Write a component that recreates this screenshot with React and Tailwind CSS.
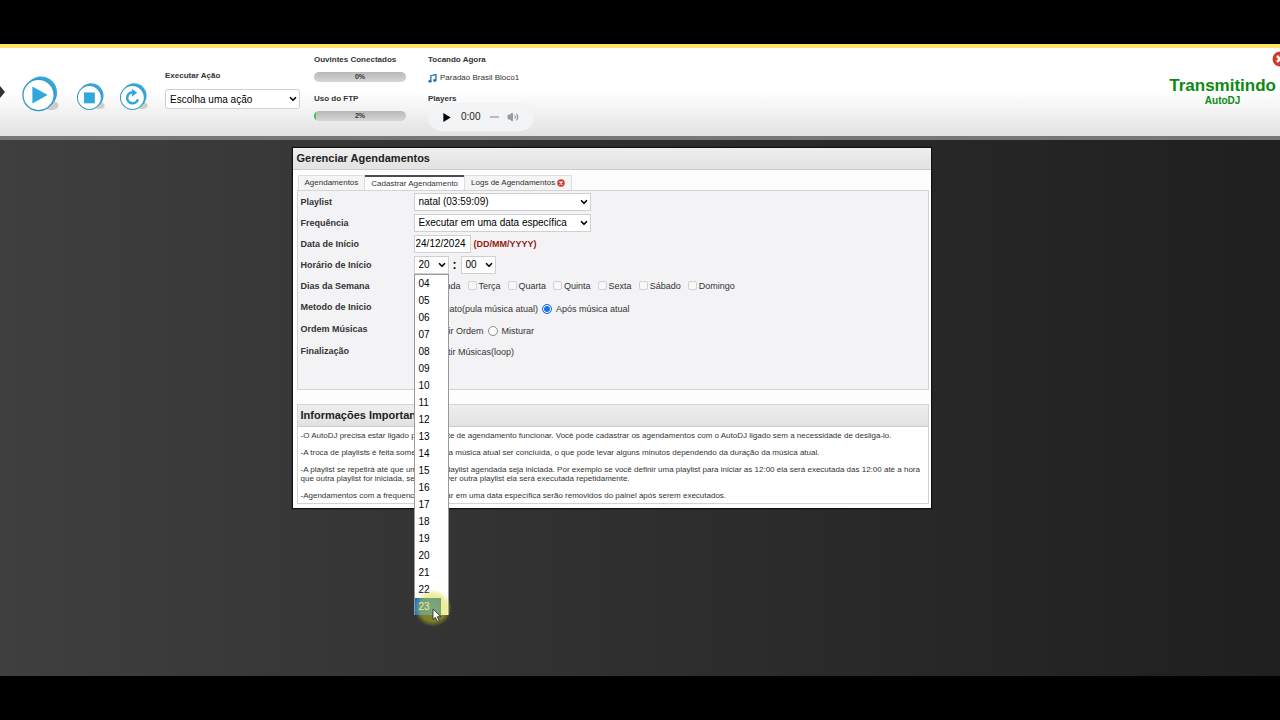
import React, { useState } from "react";
import { ChevronDown, Volume2 } from "lucide-react";

const HOURS = ["04", "05", "06", "07", "08", "09", "10", "11", "12", "13", "14", "15", "16", "17", "18", "19", "20", "21", "22", "23"];
const DAYS = ["Segunda", "Terça", "Quarta", "Quinta", "Sexta", "Sábado", "Domingo"];

const NOTES = [
  "-O AutoDJ precisa estar ligado para a parte de agendamento funcionar. Você pode cadastrar os agendamentos com o AutoDJ ligado sem a necessidade de desliga-lo.",
  "-A troca de playlists é feita somente após a música atual ser concluída, o que pode levar alguns minutos dependendo da duração da música atual.",
  "-A playlist se repetirá até que uma outra playlist agendada seja iniciada. Por exemplo se você definir uma playlist para iniciar as 12:00 ela será executada das 12:00 até a hora que outra playlist for iniciada, se não houver outra playlist ela será executada repetidamente.",
  "-Agendamentos com a frequencia executar em uma data específica serão removidos do painel após serem executados.",
];

function Select({ id, label, value, options = [value], className = "", onMouseDown }) {
  return (
    <div className={`relative ${className}`}>
      <select
        id={id}
        aria-label={label}
        defaultValue={value}
        onMouseDown={onMouseDown}
        className="block h-full w-full appearance-none border border-[#d0d0d0] bg-white pl-1 text-[10px] text-black rounded-[inherit] outline-none"
      >
        {options.map((o) => (
          <option key={o}>{o}</option>
        ))}
      </select>
      <ChevronDown className="pointer-events-none absolute right-[2px] top-1/2 size-[10px] -translate-y-1/2 text-black" strokeWidth={4} />
    </div>
  );
}

function RoundButton({ label, className, children }) {
  return (
    <button type="button" aria-label={label} className={`shrink-0 ${className}`}>
      <svg viewBox="0 0 40 38" className="block w-full">
        <ellipse cx="32" cy="31" rx="7.5" ry="5" fill="#bbb" opacity="0.7" />
        <circle cx="21" cy="17.5" r="17" fill="#30a8dc" />
        <circle cx="18.5" cy="20" r="16.5" fill="#fff" stroke="#3797c2" strokeWidth="1.4" />
        {children}
      </svg>
    </button>
  );
}

function CloseBadge({ className }) {
  return (
    <svg viewBox="0 0 16 16" className={className}>
      <circle cx="8" cy="8" r="7.5" fill="#cf3b2b" />
      <path d="M5 5l6 6M11 5l-6 6" stroke="#fff" strokeWidth="2.6" />
    </svg>
  );
}

function Meter({ title, value }) {
  return (
    <div>
      <div className="whitespace-nowrap text-[8px] font-bold leading-3">{title}</div>
      <div className="relative mt-[6px] h-[10px] overflow-hidden rounded-full bg-linear-to-b from-[#b8b8b8] to-[#d6d6d6] text-center text-[7px] font-bold leading-[10px]">
        <div className="absolute inset-y-0 left-0 bg-[#3fc44b]" style={{ width: `${value}%` }} />
        <span className="relative">{value}%</span>
      </div>
    </div>
  );
}

function Row({ label, htmlFor, className = "h-[21px]", children }) {
  return (
    <div className={`flex items-center ${className}`}>
      <label htmlFor={htmlFor} className="w-[113px] shrink-0 font-bold">{label}</label>
      {children}
    </div>
  );
}

function Radio({ label, name, defaultChecked }) {
  return (
    <label className="flex items-center gap-1">
      <input
        type="radio"
        name={name}
        defaultChecked={defaultChecked}
        className="size-[10px] appearance-none rounded-full border border-[#8a8a8a] bg-white checked:border-[#1a73e8] checked:bg-[#1a73e8] checked:shadow-[inset_0_0_0_1px_white]"
      />
      {label}
    </label>
  );
}

function Header() {
  return (
    <header className="relative flex h-[96px] shrink-0 items-start overflow-hidden border-b-4 border-t-4 border-b-[#777] border-t-[#fbe468] bg-linear-to-b from-white from-50% to-[#e2e2e2]">
      <svg viewBox="0 0 5 14" className="mt-[37px] h-[14px] w-[5px]">
        <path d="M0 1l5 6-5 6z" fill="#333" />
      </svg>
      <div className="ml-4 flex">
        <RoundButton label="Ligar" className="mt-[28px] w-[38px]">
          <path d="M12 11v18l16-9z" fill="#30a8dc" />
        </RoundButton>
        <RoundButton label="Desligar" className="ml-[17px] mt-[34px] w-[29px]">
          <path d="M11 13h15v15H11z" fill="#30a8dc" />
        </RoundButton>
        <RoundButton label="Reiniciar" className="ml-[14px] mt-[34px] w-[29px]">
          <path d="M18.500 13a7.500 7.500 0 1 0 7.500 9.500" fill="none" stroke="#30a8dc" strokeWidth="3.6" />
          <path d="M18 8l7 5.500-7 5.500z" fill="#30a8dc" />
        </RoundButton>
      </div>
      <div className="ml-[17px] mt-[22px] w-[135px]">
        <label htmlFor="acao" className="block text-[8px] font-bold leading-3">Executar Ação</label>
        <Select id="acao" value="Escolha uma ação" className="mt-[7px] h-5 rounded-[3px]" />
      </div>
      <div className="ml-[14px] mt-[6px] flex w-[92px] flex-col gap-[11px]">
        <Meter title="Ouvintes Conectados" value={0} />
        <Meter title="Uso do FTP" value={2} />
      </div>
      <div className="ml-[22px] mt-[6px] w-[106px] text-[8px] leading-3">
        <div className="font-bold">Tocando Agora</div>
        <div className="mt-[6px] flex items-center gap-[3px] whitespace-nowrap">
          <svg viewBox="0 0 16 16" className="size-[9px]">
            <path d="M5 13V3l9-2v10" fill="none" stroke="#2478b4" strokeWidth="2.4" />
            <ellipse cx="3.5" cy="13" rx="3" ry="2.5" fill="#2478b4" />
            <ellipse cx="12" cy="11.500" rx="3" ry="2.500" fill="#2478b4" />
          </svg>
          Paradao Brasil Bloco1
        </div>
        <div className="mt-[9px] font-bold">Players</div>
        <div className="-mt-[2px] flex h-7 items-center rounded-full bg-[#f1f3f4] pl-[15px]">
          <button type="button" aria-label="Tocar">
            <svg viewBox="0 0 8 10" className="h-[9px] w-[8px]">
              <path d="M0 0v10l8-5z" fill="#000" />
            </svg>
          </button>
          <span className="ml-[10px] text-[10px] text-[#222]">0:00</span>
          <span className="ml-[10px] h-[2px] w-[9px] bg-[#b8babb]" />
          <button type="button" aria-label="Volume" className="ml-2">
            <Volume2 className="size-[12px] fill-[#9a9c9d] text-[#9a9c9d]" strokeWidth={2} />
          </button>
        </div>
      </div>
      <div className="ml-auto mr-1 mt-[29px] text-center font-bold text-[#0b8a12]">
        <div className="text-[17px] leading-[18px]">Transmitindo</div>
        <div className="text-[10px] leading-3">AutoDJ</div>
      </div>
      <button type="button" aria-label="Sair" className="absolute -right-2 top-[3px]">
        <CloseBadge className="size-4" />
      </button>
    </header>
  );
}

function HourPicker() {
  const [hour, setHour] = useState("23");
  return (
    <div className="relative h-[18px] w-[35px]">
      <Select id="hora" value="20" options={HOURS} className="h-full" onMouseDown={(e) => e.preventDefault()} />
      <ul className="absolute left-0 top-full z-10 w-[35px] border-x border-t border-[#999] bg-white text-[10px] leading-[17px] text-black">
        {HOURS.map((h) => (
          <li
            key={h}
            onMouseEnter={() => setHour(h)}
            className={h === hour ? "mr-[7px] bg-[#1e6fc8] pl-1 text-white" : "pl-1"}
          >
            {h}
          </li>
        ))}
      </ul>
      {/* pointer with its click halo */}
      <div className="pointer-events-none absolute left-0 top-[333px] z-20 size-[38px] rounded-full bg-[radial-gradient(circle,rgba(225,225,40,0.5)_0%,rgba(215,215,30,0.45)_50%,rgba(190,190,20,0)_70%)]" />
      <svg viewBox="0 0 10 15" className="pointer-events-none absolute left-[18px] top-[352px] z-30 h-[15px] w-[10px]">
        <path d="M1 1v10.500l2.400-2.200 1.900 4.300 1.900-.9-1.900-4h3.300z" fill="#fff" stroke="#222" strokeWidth="0.8" />
      </svg>
    </div>
  );
}

function ScheduleForm() {
  return (
    <form className="h-[200px] border border-[#d4d4d4] bg-[#f3f3f5] pl-[3px] text-[9px] leading-3">
      <Row label="Playlist" htmlFor="playlist">
        <Select id="playlist" value="natal (03:59:09)" className="h-[18px] w-[177px]" />
      </Row>
      <Row label="Frequência" htmlFor="frequencia">
        <Select id="frequencia" value="Executar em uma data específica" className="h-[18px] w-[177px]" />
      </Row>
      <Row label="Data de Início" htmlFor="data">
        <input id="data" defaultValue="24/12/2024" className="h-[18px] w-[57px] border border-[#d0d0d0] bg-white pl-px text-[10px] text-black" />
        <span className="ml-[3px] font-bold text-[#941a10]">(DD/MM/YYYY)</span>
      </Row>
      <Row label="Horário de Início" htmlFor="hora">
        <HourPicker />
        <span className="w-[12px] text-center text-[12px] font-bold text-black">:</span>
        <Select label="Minuto" value="00" className="h-[18px] w-[35px]" />
      </Row>
      <Row label="Dias da Semana">
        <div className="flex items-center gap-[7px]">
          {DAYS.map((day) => (
            <label key={day} className="flex items-center gap-[2px]">
              <input type="checkbox" disabled className="size-[9px] appearance-none rounded-[2px] border border-[#d2d2d2] bg-[#f8f8f8]" />
              {day}
            </label>
          ))}
        </div>
      </Row>
      <Row label="Metodo de Inicio" className="h-[22px]">
        <div className="flex items-center gap-1 pt-[3px]">
          <Radio name="metodo" label="Imediato(pula música atual)" />
          <Radio name="metodo" label="Após música atual" defaultChecked />
        </div>
      </Row>
      <Row label="Ordem Músicas" className="h-[22px]">
        <div className="flex items-center gap-1 pt-[3px]">
          <Radio name="ordem" label="Seguir Ordem" defaultChecked />
          <Radio name="ordem" label="Misturar" />
        </div>
      </Row>
      <Row label="Finalização">
        <label className="flex items-center gap-1 pt-[3px]">
          <input type="checkbox" className="size-[9px] appearance-none rounded-[2px] border border-[#8a8a8a] bg-white" />
          Repetir Músicas(loop)
        </label>
      </Row>
    </form>
  );
}

export default function App() {
  return (
    <div className="flex min-h-screen flex-col bg-black py-11 font-['Liberation_Sans',Arial,sans-serif] text-[#333]">
      <Header />
      <main className="flex-1 bg-linear-to-r from-[#3f3f3f] to-[#1f1f1f] pb-8 pr-[57px] pt-2">
        <section className="mx-auto w-full max-w-[638px] bg-[#fdfdfd] pb-1 shadow-[0_0_1px_1px_#111]">
          <h1 className="h-[22px] border-b border-[#ccc] bg-linear-to-b from-[#eee] to-[#e2e2e2] pl-1 text-[11px] font-bold leading-[21px] text-[#222]">
            Gerenciar Agendamentos
          </h1>
          <div className="px-1 pt-[5px] pr-[2px]">
            <nav className="flex h-[15px] pl-px text-[8px] leading-[14px]">
              <button type="button" className="border border-b-0 border-[#ddd] bg-[#f5f5f5] px-[6px]">Agendamentos</button>
              <button type="button" className="border-t-2 border-[#464c55] bg-white px-[6px] leading-3">Cadastrar Agendamento</button>
              <button type="button" className="flex items-center gap-[2px] border border-b-0 border-[#ddd] bg-[#f5f5f5] px-[6px]">
                Logs de Agendamentos
                <CloseBadge className="size-2" />
              </button>
            </nav>
            <ScheduleForm />
            <div className="mt-[14px] border border-[#d4d4d4] bg-white">
              <h2 className="h-[22px] border-b border-[#ccc] bg-linear-to-b from-[#eee] to-[#e2e2e2] pl-[3px] text-[11px] font-bold leading-[21px] text-[#222]">
                Informações Importantes
              </h2>
              <div className="flex flex-col gap-2 px-[3px] pb-[3px] pt-1 text-[8px] leading-[9px]">
                {NOTES.map((note) => (
                  <p key={note}>{note}</p>
                ))}
              </div>
            </div>
          </div>
        </section>
      </main>
    </div>
  );
}
